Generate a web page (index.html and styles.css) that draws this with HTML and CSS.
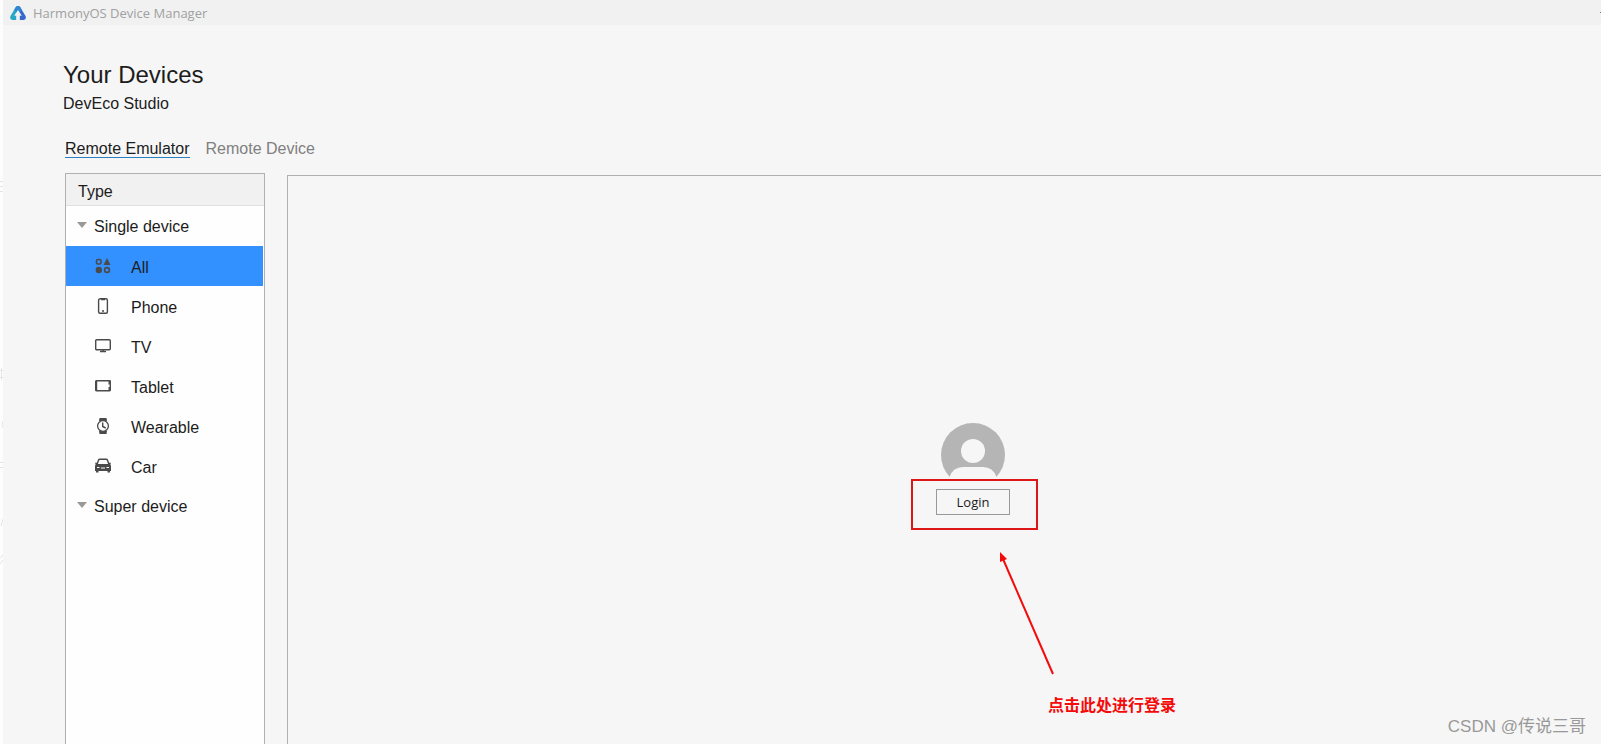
FILE: index.html
```html
<!DOCTYPE html>
<html lang="en">
<head>
  <meta charset="UTF-8">
  <meta name="viewport" content="width=device-width, initial-scale=1.0">
  <title>HarmonyOS Device Manager</title>
  <link rel="stylesheet" href="styles.css">
</head>
<body>
  <div class="edge">
    <svg width="3" height="744" viewBox="0 0 3 744" fill="none" stroke="#e4e4e4">
      <path d="M0 181.500h3M0 186.500h3M0 191.500h3M0 370.500h3M0 377.500h3M1.500 368v12M3 421q-2 3 0 7M0 462.500h3M0 467.500h3M3 519l-2 7M0 558l3-3M0 564l3-4"/>
    </svg>
  </div>
  <div class="window">
    <header class="titlebar">
      <svg class="logo" width="16" height="14" viewBox="0 0 16 14">
        <path d="M8 0Q6.500 0 5.700 1.300L.6 9.800Q-1 13.600 2.500 14H6.200V9.800H4.300L8 3.600z" fill="#27a9c6"/>
        <path d="M8 0q1.500 0 2.300 1.300l5.100 8.500q1.600 3.800-1.900 4.200H9.800V9.800h1.900L8 3.600z" fill="#3568ca"/>
        <path d="M5.700 1.300Q6.500 0 8 0t2.300 1.300L12 4.200 9.700 6.400 8 3.600 6.300 6.400 4.300 3.600z" fill="#2f86d3"/>
      </svg>
      <span>HarmonyOS Device Manager</span>
      <span class="minimize"></span>
    </header>

    <div class="content">
      <h1>Your Devices</h1>
      <p class="subtitle">DevEco Studio</p>

      <nav class="tabs">
        <a href="#emulator" class="active">Remote Emulator</a>
        <a href="#device">Remote Device</a>
      </nav>

      <div class="columns">
        <aside class="sidebar">
          <h2>Type</h2>
          <button class="group"><span class="arrow"></span>Single device</button>
          <button class="item selected">
            <svg width="16" height="16" viewBox="0 0 16 16" fill="#4a4a4a">
              <rect x="1.500" y="1.500" width="4.500" height="4.500" rx="1.500" fill="none" stroke="#4a4a4a" stroke-width="1.600"/>
              <path d="M12 0l3.500 7h-7z"/>
              <circle cx="3.800" cy="12" r="3.200"/>
              <circle cx="12" cy="12" r="2.400" fill="none" stroke="#4a4a4a" stroke-width="1.600"/>
            </svg>
            All
          </button>
          <button class="item">
            <svg width="16" height="16" viewBox="0 0 16 16" fill="none" stroke="#4a4a4a" stroke-width="1.400">
              <rect x="3.600" y=".7" width="8.800" height="14.600" rx="1.500"/>
              <path d="M6 1.500h4M7 13h2"/>
            </svg>
            Phone
          </button>
          <button class="item">
            <svg width="16" height="16" viewBox="0 0 16 16" fill="none" stroke="#4a4a4a" stroke-width="1.400">
              <rect x=".7" y="1.700" width="14.600" height="10" rx="1"/>
              <path d="M5 13.500h6M8 12v2"/>
            </svg>
            TV
          </button>
          <button class="item">
            <svg width="16" height="16" viewBox="0 0 16 16" fill="none" stroke="#4a4a4a" stroke-width="1.400">
              <rect x=".7" y="2.700" width="14.600" height="10" rx=".6"/>
              <path d="M1.500 3v9.500M14.200 3v3.500M14.200 9v3.500"/>
            </svg>
            Tablet
          </button>
          <button class="item">
            <svg width="16" height="16" viewBox="0 0 16 16" fill="#4a4a4a">
              <path d="M4.500 0h7l.5 3H4zM4 13h8l-.5 3h-7z"/>
              <circle cx="8" cy="8" r="5.400" fill="#fefefe" stroke="#4a4a4a" stroke-width="1.300"/>
              <path d="M7.700 4.500v4l3 1.500" fill="none" stroke="#4a4a4a" stroke-width="1.400"/>
            </svg>
            Wearable
          </button>
          <button class="item">
            <svg width="16" height="16" viewBox="0 0 16 16" fill="#4a4a4a">
              <path d="M2 6.500l1.500-4.300q.3-.9 1.200-.9h6.600q.9 0 1.200.9L14 6.500" fill="none" stroke="#4a4a4a" stroke-width="1.400"/>
              <path d="M0 4.700h2V6h12V4.700h2l-.6 1.600.6 1.700v5h-1v1.500h-2.500V13h-9v1.500H1V13H0V8l.6-1.700z"/>
              <path d="M2 9.500h2.500M11.500 9.500H14M6 10h4" stroke="#fefefe"/>
            </svg>
            Car
          </button>
          <button class="group"><span class="arrow"></span>Super device</button>
        </aside>

        <main class="panel">
          <div class="account">
            <svg class="avatar" width="64" height="54" viewBox="0 0 64 54">
              <circle cx="32" cy="32" r="32" fill="#b5b5b5"/>
              <circle cx="32" cy="28" r="12" fill="#f6f6f6"/>
              <path d="M8 56q3-12 14-12h20q11 0 14 12z" fill="#f6f6f6"/>
            </svg>
            <button class="login">Login</button>
            <div class="highlight"></div>
            <svg class="pointer" width="58" height="124" viewBox="0 0 58 124">
              <path d="M5 7l50 115" stroke="#f50a0a" stroke-width="2"/>
              <path d="M2 0l7 7-7 3z" fill="#f50a0a"/>
            </svg>
            <p class="note">点击此处进行登录</p>
          </div>
        </main>
      </div>
    </div>
  </div>
  <div class="watermark">CSDN @传说三哥</div>
</body>
</html>
```
FILE: styles.css
```css
body {
  margin: 0;
  display: flex;
  height: 100vh;
  overflow: hidden;
  background-color: #fdfdfd;
  color: #1c1c1c;
  font-family: "Liberation Sans", "Noto Sans CJK SC", sans-serif;
  font-size: 16px;
}

.edge {
  width: 3px;
  overflow: hidden;
}

.window {
  flex: 1;
  min-width: 0;
  display: flex;
  flex-direction: column;
  background-color: #f6f6f6;
}

.titlebar {
  display: flex;
  align-items: center;
  gap: 7px;
  height: 25px;
  padding-left: 7px;
  background-color: #f1f1f1;
  color: #a0a0a0;
  font-family: "Open Sans", sans-serif;
  font-size: 13px;
}

.minimize {
  width: 1px;
  height: 1px;
  margin-left: auto;
  background-color: #777;
}

.content {
  flex: 1;
  display: flex;
  flex-direction: column;
  padding: 35px 0 0 60px;
}

h1 {
  margin: 0;
  font-size: 24px;
  font-weight: normal;
  line-height: 30px;
}

.subtitle {
  margin: 4px 0 0;
  line-height: 20px;
}

.tabs {
  display: flex;
  gap: 16px;
  margin: 26px 0 15px;
  padding-left: 2px;
}

.tabs a {
  color: #808080;
  line-height: 17px;
  text-decoration: none;
  border-bottom: 1px solid transparent;
}

.tabs .active {
  color: #1c1c1c;
  border-bottom-color: #2a7fc0;
}

.columns {
  flex: 1;
  display: flex;
  gap: 22px;
  padding-left: 2px;
}

.sidebar {
  box-sizing: border-box;
  width: 200px;
  border: 1px solid #b0b0b0;
  border-bottom: 0;
  background-color: #fefefe;
}

.sidebar h2 {
  margin: 0;
  padding: 4px 0 0 12px;
  background-color: #f1f1f1;
  border-bottom: 1px solid #e0e0e0;
  font-size: 16px;
  font-weight: normal;
  line-height: 27px;
}

button {
  border: none;
  background: none;
  color: inherit;
  font: inherit;
  cursor: pointer;
}

.group,
.item {
  display: flex;
  align-items: center;
  width: 197px;
  height: 40px;
  padding: 3px 0 0 29px;
}

.group {
  gap: 7px;
  padding: 2px 0 0 11px;
}

.arrow {
  border: 5px solid transparent;
  border-top: 6px solid #999;
  border-bottom: 0;
  margin-bottom: 4px;
}

.item {
  gap: 20px;
}

.item svg {
  margin-bottom: 4px;
}

.selected {
  background-color: #3390ff;
}

/* the panel runs on past the right side of the window */
.panel {
  flex: 1;
  margin: 2px -58px 0 0;
  padding-top: 247px;
  border: 1px solid #b0b0b0;
  border-bottom: 0;
}

.account {
  position: relative;
  display: flex;
  flex-direction: column;
  align-items: center;
  gap: 12px;
  width: 126px;
  margin: 0 auto;
}

.login {
  width: 74px;
  height: 26px;
  padding: 0;
  border: 1px solid #999;
  font-family: "Open Sans", sans-serif;
  font-size: 13px;
}

.highlight {
  position: absolute;
  top: 56px;
  left: 1px;
  box-sizing: border-box;
  width: 127px;
  height: 51px;
  border: 2px solid #dd1717;
  pointer-events: none;
}

.pointer {
  position: absolute;
  top: 129px;
  left: 88px;
}

.note {
  position: absolute;
  top: 269px;
  left: 138px;
  margin: 0;
  color: #f50a0a;
  font-family: "Noto Sans CJK SC", sans-serif;
  font-weight: bold;
  line-height: 24px;
  white-space: nowrap;
}

.watermark {
  position: absolute;
  right: 15px;
  bottom: 3px;
  color: #999;
  font-size: 17px;
  line-height: 28px;
}
```
